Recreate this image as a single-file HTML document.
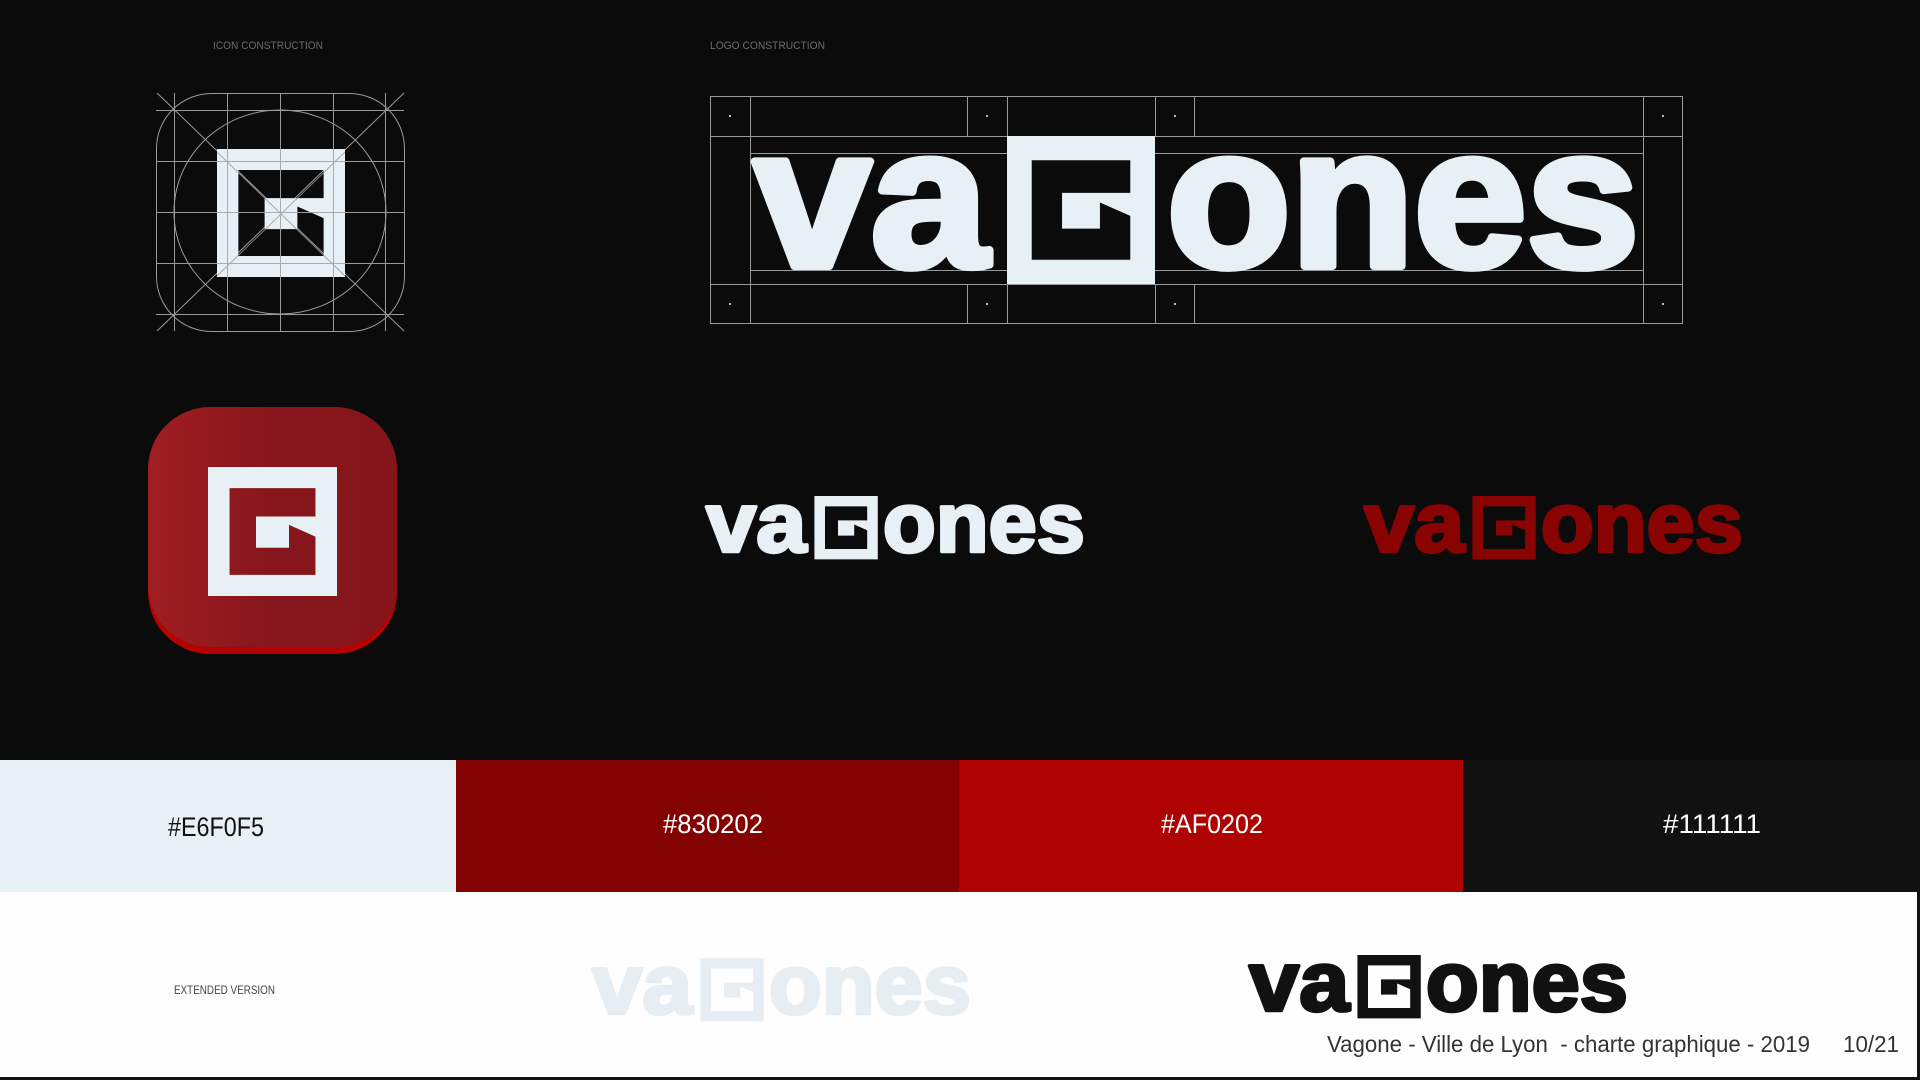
<!DOCTYPE html>
<html><head><meta charset="utf-8"><style>html,body{margin:0;padding:0;background:#0b0b0c;width:1920px;height:1080px;overflow:hidden}svg{display:block}</style></head>
<body>
<svg width="1920" height="1080" viewBox="0 0 1920 1080" xmlns="http://www.w3.org/2000/svg" font-family="Liberation Sans, sans-serif">
<defs>
<linearGradient id="rg" x1="0" y1="0" x2="1" y2="0"><stop offset="0" stop-color="#a01e22"/><stop offset="0.5" stop-color="#86161b"/><stop offset="1" stop-color="#85151a"/></linearGradient>
</defs>
<rect width="1920" height="1080" fill="#0b0b0c"/>
<text x="268" y="49" font-size="11" fill="#6a6a6a" text-anchor="middle" textLength="110" lengthAdjust="spacingAndGlyphs">ICON CONSTRUCTION</text>
<text x="710" y="49" font-size="11" fill="#6a6a6a" textLength="115" lengthAdjust="spacingAndGlyphs">LOGO CONSTRUCTION</text>

<g stroke="#9a9a9a" stroke-width="1" fill="none">
<rect x="156.5" y="93.5" width="248" height="238" rx="55"/>
<ellipse cx="280" cy="212" rx="106" ry="102"/>
<line x1="174.5" y1="93" x2="174.5" y2="331"/><line x1="227.5" y1="93" x2="227.5" y2="331"/><line x1="280.5" y1="93" x2="280.5" y2="331"/><line x1="333.5" y1="93" x2="333.5" y2="331"/><line x1="385.5" y1="93" x2="385.5" y2="331"/>
<line x1="156" y1="110.5" x2="404" y2="110.5"/><line x1="156" y1="161.5" x2="404" y2="161.5"/><line x1="156" y1="212.5" x2="404" y2="212.5"/><line x1="156" y1="263.5" x2="404" y2="263.5"/><line x1="156" y1="314.5" x2="404" y2="314.5"/>
<line x1="157" y1="93" x2="404" y2="331"/><line x1="404" y1="93" x2="157" y2="331"/>
</g>
<g transform="translate(217,149) scale(1.28)"><path fill="#e6f0f5" fill-rule="evenodd" d="M0 0H100V100H0Z M16.7 16.4H83.3V38.4H37.2V62.6H62.8V44.9L83.3 54V83.6H16.7Z"/></g>
<g stroke="#9a9a9a" stroke-width="1" fill="none" opacity="0.8">
<line x1="280.5" y1="149" x2="280.5" y2="277"/><line x1="217" y1="212.5" x2="345" y2="212.5"/><line x1="217" y1="161.5" x2="345" y2="161.5"/><line x1="217" y1="263.5" x2="345" y2="263.5"/><line x1="227.5" y1="149" x2="227.5" y2="277"/><line x1="333.5" y1="149" x2="333.5" y2="277"/>
<line x1="217" y1="152" x2="345" y2="276"/><line x1="345" y1="152" x2="217" y2="276"/>
</g>

<g stroke="#9a9a9a" stroke-width="1" fill="none">
<rect x="710.5" y="96.5" width="972" height="227"/>
<line x1="710" y1="136.5" x2="1682" y2="136.5"/><line x1="710" y1="284.5" x2="1682" y2="284.5"/>
<line x1="750" y1="153.5" x2="1643" y2="153.5"/><line x1="750" y1="270.5" x2="1643" y2="270.5"/>
<line x1="750.5" y1="96" x2="750.5" y2="323"/><line x1="1643.5" y1="96" x2="1643.5" y2="323"/>
<line x1="967.5" y1="96" x2="967.5" y2="136"/><line x1="1007.5" y1="96" x2="1007.5" y2="136"/><line x1="1155.5" y1="96" x2="1155.5" y2="136"/><line x1="1194.5" y1="96" x2="1194.5" y2="136"/>
<line x1="967.5" y1="284" x2="967.5" y2="323"/><line x1="1007.5" y1="284" x2="1007.5" y2="323"/><line x1="1155.5" y1="284" x2="1155.5" y2="323"/><line x1="1194.5" y1="284" x2="1194.5" y2="323"/>
</g>
<g fill="#bbb"><rect x="729" y="115" width="2" height="2"/><rect x="986" y="115" width="2" height="2"/><rect x="1174" y="115" width="2" height="2"/><rect x="1662" y="115" width="2" height="2"/>
<rect x="729" y="303" width="2" height="2"/><rect x="986" y="303" width="2" height="2"/><rect x="1174" y="303" width="2" height="2"/><rect x="1662" y="303" width="2" height="2"/></g>

<g transform="translate(749,136)" fill="#e6f0f5" stroke="#e6f0f5" stroke-width="8" stroke-linejoin="round">
<text x="5" y="130" font-size="198" font-weight="bold" textLength="234" lengthAdjust="spacingAndGlyphs">va</text>
<g stroke="none" transform="translate(258,0) scale(1.48)"><path fill-rule="evenodd" d="M0 0H100V100H0Z M16.7 16.4H83.3V38.4H37.2V62.6H62.8V44.9L83.3 54V83.6H16.7Z"/></g>
<text x="418" y="130" font-size="198" font-weight="bold" textLength="472" lengthAdjust="spacingAndGlyphs">ones</text>
</g>

<rect x="148" y="414" width="249" height="240" rx="62" fill="#b40202"/>
<rect x="148" y="407" width="249" height="240" rx="62" fill="url(#rg)"/>
<g transform="translate(208,467) scale(1.29)"><path fill="#e6f0f5" fill-rule="evenodd" d="M0 0H100V100H0Z M16.7 16.4H83.3V38.4H37.2V62.6H62.8V44.9L83.3 54V83.6H16.7Z"/></g>

<g transform="translate(704,496) scale(0.428)" fill="#e6f0f5" stroke="#e6f0f5" stroke-width="8" stroke-linejoin="round">
<text x="5" y="130" font-size="198" font-weight="bold" textLength="234" lengthAdjust="spacingAndGlyphs">va</text>
<g stroke="none" transform="translate(258,0) scale(1.48)"><path fill-rule="evenodd" d="M0 0H100V100H0Z M16.7 16.4H83.3V38.4H37.2V62.6H62.8V44.9L83.3 54V83.6H16.7Z"/></g>
<text x="418" y="130" font-size="198" font-weight="bold" textLength="472" lengthAdjust="spacingAndGlyphs">ones</text>
</g>
<g transform="translate(1362,496) scale(0.428)" fill="#8a0303" stroke="#8a0303" stroke-width="8" stroke-linejoin="round">
<text x="5" y="130" font-size="198" font-weight="bold" textLength="234" lengthAdjust="spacingAndGlyphs">va</text>
<g stroke="none" transform="translate(258,0) scale(1.48)"><path fill-rule="evenodd" d="M0 0H100V100H0Z M16.7 16.4H83.3V38.4H37.2V62.6H62.8V44.9L83.3 54V83.6H16.7Z"/></g>
<text x="418" y="130" font-size="198" font-weight="bold" textLength="472" lengthAdjust="spacingAndGlyphs">ones</text>
</g>

<rect x="0" y="760" width="456" height="132" fill="#e6f0f5"/>
<rect x="456" y="760" width="503" height="132" fill="#830202"/>
<rect x="959" y="760" width="504" height="132" fill="#af0202"/>
<rect x="1463" y="760" width="457" height="132" fill="#111111"/>
<g font-size="27" text-anchor="middle">
<text x="216" y="836" fill="#111" textLength="96" lengthAdjust="spacingAndGlyphs">#E6F0F5</text>
<text x="713" y="833" fill="#fff" textLength="100" lengthAdjust="spacingAndGlyphs">#830202</text>
<text x="1212" y="833" fill="#fff" textLength="102" lengthAdjust="spacingAndGlyphs">#AF0202</text>
<text x="1712" y="833" fill="#fff" textLength="98" lengthAdjust="spacingAndGlyphs">#111111</text>
</g>

<rect x="0" y="892" width="1920" height="188" fill="#fefefe"/>
<rect x="0" y="1077" width="1920" height="3" fill="#111"/>
<rect x="1917" y="892" width="3" height="188" fill="#111"/>
<text x="174" y="994" font-size="12" fill="#444" textLength="101" lengthAdjust="spacingAndGlyphs">EXTENDED VERSION</text>
<g transform="translate(590,958) scale(0.428)" fill="#e6eef3" stroke="#e6eef3" stroke-width="8" stroke-linejoin="round">
<text x="5" y="130" font-size="198" font-weight="bold" textLength="234" lengthAdjust="spacingAndGlyphs">va</text>
<g stroke="none" transform="translate(258,0) scale(1.48)"><path fill-rule="evenodd" d="M0 0H100V100H0Z M16.7 16.4H83.3V38.4H37.2V62.6H62.8V44.9L83.3 54V83.6H16.7Z"/></g>
<text x="418" y="130" font-size="198" font-weight="bold" textLength="472" lengthAdjust="spacingAndGlyphs">ones</text>
</g>
<g transform="translate(1247,955) scale(0.428)" fill="#111" stroke="#111" stroke-width="8" stroke-linejoin="round">
<text x="5" y="130" font-size="198" font-weight="bold" textLength="234" lengthAdjust="spacingAndGlyphs">va</text>
<g stroke="none" transform="translate(258,0) scale(1.48)"><path fill-rule="evenodd" d="M0 0H100V100H0Z M16.7 16.4H83.3V38.4H37.2V62.6H62.8V44.9L83.3 54V83.6H16.7Z"/></g>
<text x="418" y="130" font-size="198" font-weight="bold" textLength="472" lengthAdjust="spacingAndGlyphs">ones</text>
</g>
<text x="1327" y="1052" font-size="23" fill="#333" textLength="483" lengthAdjust="spacingAndGlyphs" xml:space="preserve">Vagone - Ville de Lyon  - charte graphique - 2019</text>
<text x="1843" y="1052" font-size="23" fill="#333" textLength="56" lengthAdjust="spacingAndGlyphs">10/21</text>
</svg>
</body></html>
